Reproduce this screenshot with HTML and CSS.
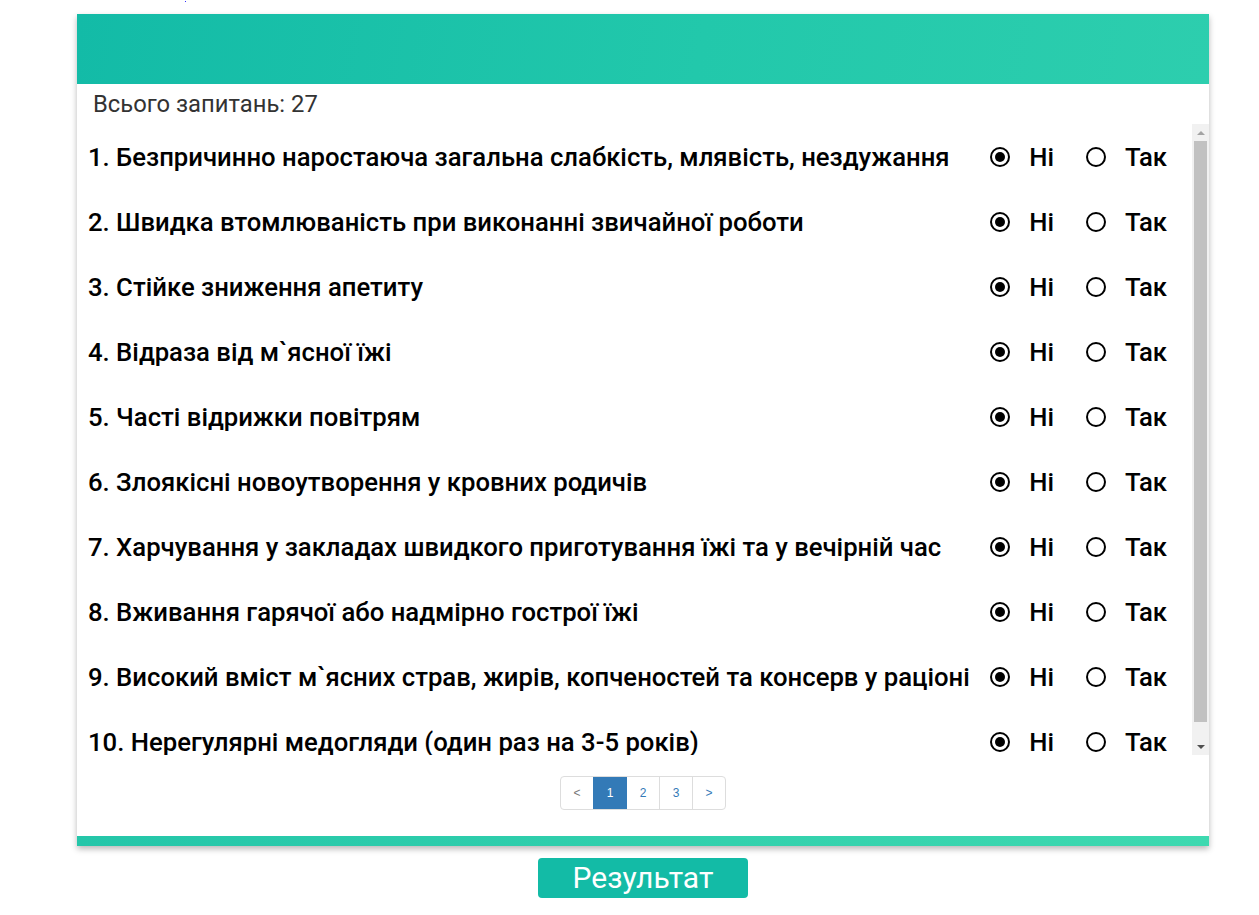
FILE: index.html
```html
<!DOCTYPE html>
<html lang="uk">
<head>
<meta charset="utf-8">
<title>Тест</title>
<link rel="stylesheet" href="styles.css">
</head>
<body>
<div class="topline"><span class="dot"></span></div>
<div class="wrap">
  <div class="card">
    <div class="card-head"></div>
    <div class="count">Всього запитань: 27</div>
    <div class="list">
      <div class="list-body">
        <div class="row"><div class="q">1. Безпричинно наростаюча загальна слабкість, млявість, нездужання</div><div class="ans"><label class="opt"><input type="radio" name="q1" checked><span>Ні</span></label><label class="opt"><input type="radio" name="q1"><span>Так</span></label></div></div>
        <div class="row"><div class="q">2. Швидка втомлюваність при виконанні звичайної роботи</div><div class="ans"><label class="opt"><input type="radio" name="q2" checked><span>Ні</span></label><label class="opt"><input type="radio" name="q2"><span>Так</span></label></div></div>
        <div class="row"><div class="q">3. Стійке зниження апетиту</div><div class="ans"><label class="opt"><input type="radio" name="q3" checked><span>Ні</span></label><label class="opt"><input type="radio" name="q3"><span>Так</span></label></div></div>
        <div class="row"><div class="q">4. Відраза від м`ясної їжі</div><div class="ans"><label class="opt"><input type="radio" name="q4" checked><span>Ні</span></label><label class="opt"><input type="radio" name="q4"><span>Так</span></label></div></div>
        <div class="row"><div class="q">5. Часті відрижки повітрям</div><div class="ans"><label class="opt"><input type="radio" name="q5" checked><span>Ні</span></label><label class="opt"><input type="radio" name="q5"><span>Так</span></label></div></div>
        <div class="row"><div class="q">6. Злоякісні новоутворення у кровних родичів</div><div class="ans"><label class="opt"><input type="radio" name="q6" checked><span>Ні</span></label><label class="opt"><input type="radio" name="q6"><span>Так</span></label></div></div>
        <div class="row"><div class="q">7. Харчування у закладах швидкого приготування їжі та у вечірній час</div><div class="ans"><label class="opt"><input type="radio" name="q7" checked><span>Ні</span></label><label class="opt"><input type="radio" name="q7"><span>Так</span></label></div></div>
        <div class="row"><div class="q">8. Вживання гарячої або надмірно гострої їжі</div><div class="ans"><label class="opt"><input type="radio" name="q8" checked><span>Ні</span></label><label class="opt"><input type="radio" name="q8"><span>Так</span></label></div></div>
        <div class="row"><div class="q">9. Високий вміст м`ясних страв, жирів, копченостей та консерв у раціоні</div><div class="ans"><label class="opt"><input type="radio" name="q9" checked><span>Ні</span></label><label class="opt"><input type="radio" name="q9"><span>Так</span></label></div></div>
        <div class="row"><div class="q">10. Нерегулярні медогляди (один раз на 3-5 років)</div><div class="ans"><label class="opt"><input type="radio" name="q10" checked><span>Ні</span></label><label class="opt"><input type="radio" name="q10"><span>Так</span></label></div></div>
      </div>
      <div class="scrollbar" aria-hidden="true">
        <div class="sb-btn"><span class="arrow-up"></span></div>
        <div class="sb-thumb"></div>
        <div class="sb-rest"></div>
        <div class="sb-btn"><span class="arrow-down"></span></div>
      </div>
    </div>
    <div class="pager">
      <ul class="pagination">
        <li class="pg disabled">&lt;</li>
        <li class="pg active">1</li>
        <li class="pg">2</li>
        <li class="pg">3</li>
        <li class="pg">&gt;</li>
      </ul>
    </div>
    <div class="card-foot"></div>
  </div>
  <div class="actions"><button class="btn-result" type="button">Результат</button></div>
</div>
</body>
</html>
```

FILE: styles.css
```css
html, body {
  margin: 0;
  padding: 0;
  background: #fff;
}
body {
  font-family: Roboto, "Liberation Sans", sans-serif;
  color: #000;
}
.topline {
  height: 14px;
  display: flex;
  align-items: flex-start;
}
.dot {
  display: block;
  width: 1px;
  height: 1px;
  margin: 1px 0 0 185px;
  background: #3030ff;
}
.wrap {
  width: 1132px;
  margin-left: 77px;
}
.card {
  background: #fff;
  box-shadow: 0 3px 6px rgba(0, 0, 0, 0.28);
}
.card-head {
  height: 70px;
  background: linear-gradient(100deg, #13bba7 0%, #22c8ab 55%, #2dceae 100%);
}
.count {
  height: 40px;
  line-height: 40px;
  padding-left: 16px;
  font-size: 23.8px;
  color: #333;
}
.list {
  height: 631px;
  display: flex;
  overflow: hidden;
}
.list-body {
  flex: 1;
  min-width: 0;
  overflow: hidden;
}
.scrollbar {
  width: 17px;
  flex: none;
  background: #f1f1f1;
  display: flex;
  flex-direction: column;
}
.sb-btn {
  height: 17px;
  flex: none;
  display: flex;
  align-items: center;
  justify-content: center;
}
.arrow-up {
  width: 0;
  height: 0;
  border-left: 4px solid transparent;
  border-right: 4px solid transparent;
  border-bottom: 4px solid #a3a3a3;
}
.arrow-down {
  width: 0;
  height: 0;
  border-left: 4px solid transparent;
  border-right: 4px solid transparent;
  border-top: 4px solid #505050;
}
.sb-thumb {
  height: 581px;
  margin: 0 2px;
  background: #c1c1c1;
  flex: none;
}
.sb-rest {
  flex: 1;
}
.row {
  height: 65px;
  display: flex;
  align-items: center;
  justify-content: space-between;
  padding-left: 11px;
  padding-right: 25px;
}
.q {
  font-size: 25.7px;
  font-weight: 500;
  white-space: nowrap;
}
.ans {
  display: flex;
  align-items: center;
  gap: 32px;
}
.opt {
  display: flex;
  align-items: center;
  gap: 19px;
  font-size: 25.7px;
  font-weight: 500;
}
.opt input {
  appearance: none;
  -webkit-appearance: none;
  margin: 0;
  width: 20px;
  height: 20px;
  border: 2px solid #000;
  border-radius: 50%;
  background: #fff;
  display: grid;
  place-content: center;
}
.opt input:checked::before {
  content: "";
  width: 10px;
  height: 10px;
  border-radius: 50%;
  background: #000;
}
.pager {
  display: flex;
  justify-content: center;
  padding: 21px 0 26px;
}
.pagination {
  display: flex;
  list-style: none;
  margin: 0;
  padding: 0;
  border: 1px solid #ddd;
  border-radius: 4px;
  overflow: hidden;
  font-family: "Liberation Sans", Arial, sans-serif;
  font-size: 12px;
}
.pg {
  width: 32px;
  height: 32px;
  line-height: 32px;
  text-align: center;
  color: #337ab7;
  border-left: 1px solid #ddd;
}
.pg:first-child {
  border-left: none;
}
.pg.disabled {
  color: #777;
}
.pg.active {
  background: #337ab7;
  color: #fff;
  border-left-color: #337ab7;
}
.pg.active + .pg {
  border-left-color: #337ab7;
}
.card-foot {
  height: 10px;
  background: linear-gradient(to right, #24c6a9, #3ed9b0);
}
.actions {
  display: flex;
  justify-content: center;
  padding-top: 12px;
}
.btn-result {
  width: 210px;
  height: 40px;
  border: none;
  border-radius: 4px;
  background: #13bba6;
  color: #fff;
  font-family: Roboto, "Liberation Sans", sans-serif;
  font-size: 30px;
  line-height: 40px;
  padding: 0;
  cursor: pointer;
}
```
